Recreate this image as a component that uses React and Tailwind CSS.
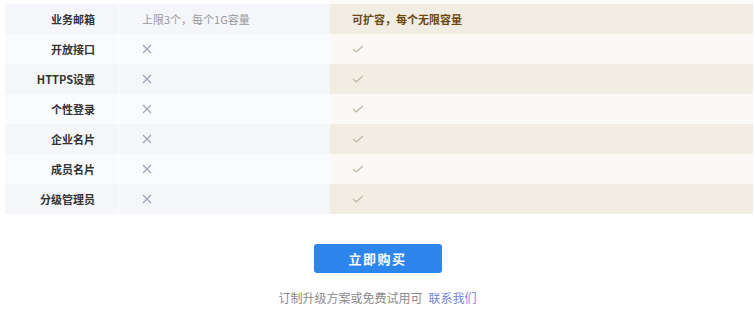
const rows = [
  { name: '开放接口' },
  { name: 'HTTPS设置' },
  { name: '个性登录' },
  { name: '企业名片' },
  { name: '成员名片' },
  { name: '分级管理员' },
];

const Cross = () => (
  <svg width="10" height="10" viewBox="0 0 10 10" className="block">
    <path d="M1 1 L9 9 M9 1 L1 9" stroke="#a3a9b9" strokeWidth="1.4" fill="none" />
  </svg>
);

const Check = () => (
  <svg width="12" height="8" viewBox="0 0 12 8" className="block">
    <path d="M1 4 L4.2 6.8 L11 1" stroke="#c2b9ad" strokeWidth="1.3" fill="none" />
  </svg>
);

const Row = ({ odd, label, left, right }) => (
  <div className="flex h-[30px]">
    <div
      className={`w-[114px] shrink-0 flex items-center justify-end pr-[23px] border-r border-white text-[11px] font-bold text-[#333] ${
        odd ? 'bg-[#f5f6fa]' : 'bg-[#fafbfd]'
      }`}
    >
      {label}
    </div>
    <div
      className={`w-[211px] shrink-0 flex items-center pl-[23px] ${
        odd ? 'bg-[#f5f6fa]' : 'bg-[#fafbfd]'
      }`}
    >
      {left}
    </div>
    <div
      className={`flex-1 flex items-center pl-[22px] ${
        odd ? 'bg-[#f2ede3]' : 'bg-[#faf9f5]'
      }`}
    >
      {right}
    </div>
  </div>
);

export default function App() {
  return (
    <div
      className="w-[755px] h-[319px] bg-white"
      style={{ fontFamily: '"Noto Sans CJK SC", "Noto Sans", sans-serif' }}
    >
      <div className="pl-[5px] pr-[2px]">
        {/* tail of the row above */}
        <div className="flex h-[4px]">
          <div className="w-[114px] border-r border-white bg-white" />
          <div className="w-[211px] bg-[#fdfdfe]" />
          <div className="flex-1 bg-[#fbfaf7]" />
        </div>

        <Row
          odd
          label="业务邮箱"
          left={<span className="text-[11px] text-[#999]">上限3个，每个1G容量</span>}
          right={<span className="text-[11px] font-bold text-[#6b4a10]">可扩容，每个无限容量</span>}
        />
        {rows.map((r, i) => (
          <Row key={r.name} odd={i % 2 === 1} label={r.name} left={<Cross />} right={<Check />} />
        ))}
      </div>

      <div className="flex flex-col items-center pt-[30px]">
        <button className="w-[128px] h-[29px] rounded-[3px] bg-[#2d86ec] text-white text-[13px] font-bold tracking-[1.5px]">
          立即购买
        </button>
        <p className="mt-[16px] text-[12px] text-[#8a8a8a]">
          订制升级方案或免费试用可
          <a className="ml-[6px] text-[#6f86d6]">联系我们</a>
        </p>
      </div>
    </div>
  );
}
